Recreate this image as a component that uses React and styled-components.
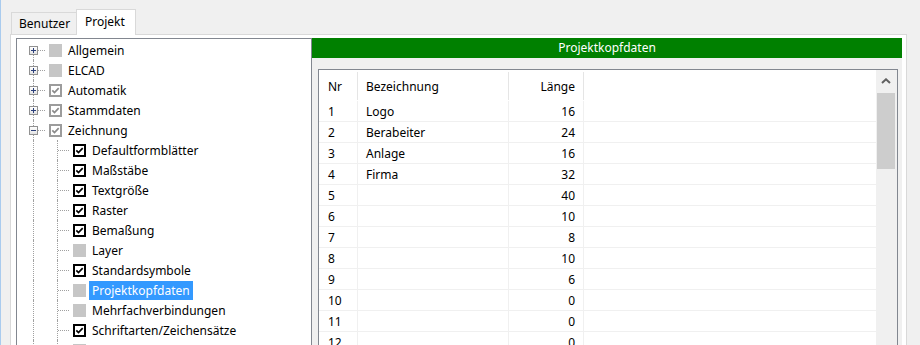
import React from "react";
import styled, { createGlobalStyle, css } from "styled-components";

const GlobalStyle = createGlobalStyle`
    html, body {
        margin: 0;
        padding: 0;
        background: #f0f0f0;
    }
    body {
        font-family: "Noto Sans", "Open Sans", sans-serif;
        font-size: 12px;
        color: #000;
    }
`;

const TREE_ITEMS = [
    { level: 0, expander: "plus", box: "gray", label: "Allgemein", first: true },
    { level: 0, expander: "plus", box: "gray", label: "ELCAD" },
    { level: 0, expander: "plus", box: "grayChecked", label: "Automatik" },
    { level: 0, expander: "plus", box: "grayChecked", label: "Stammdaten" },
    { level: 0, expander: "minus", box: "grayChecked", label: "Zeichnung" },
    { level: 1, box: "checked", label: "Defaultformblätter" },
    { level: 1, box: "checked", label: "Maßstäbe" },
    { level: 1, box: "checked", label: "Textgröße" },
    { level: 1, box: "checked", label: "Raster" },
    { level: 1, box: "checked", label: "Bemaßung" },
    { level: 1, box: "gray", label: "Layer" },
    { level: 1, box: "checked", label: "Standardsymbole" },
    { level: 1, box: "gray", label: "Projektkopfdaten", selected: true },
    { level: 1, box: "gray", label: "Mehrfachverbindungen" },
    { level: 1, box: "checked", label: "Schriftarten/Zeichensätze" },
    { level: 1, box: "gray", label: "Grafikeinstellungen" },
];

const ROWS = [
    ["1", "Logo", "16"],
    ["2", "Berabeiter", "24"],
    ["3", "Anlage", "16"],
    ["4", "Firma", "32"],
    ["5", "", "40"],
    ["6", "", "10"],
    ["7", "", "8"],
    ["8", "", "10"],
    ["9", "", "6"],
    ["10", "", "0"],
    ["11", "", "0"],
    ["12", "", "0"],
];

const Window = styled.div`
    height: 345px;
    overflow: hidden;
    border-left: 1px solid #a9cbee;
    padding: 9px 0 0 9px;
    box-sizing: border-box;
`;

const TabStrip = styled.div`
    display: flex;
    align-items: flex-end;
    height: 25px;
    padding-left: 1px;
    position: relative;
    z-index: 1;
`;

const Tab = styled.div`
    box-sizing: border-box;
    border: 1px solid #d9d9d9;
    border-bottom: none;
    white-space: nowrap;
    ${(p) =>
        p.$active
            ? css`
                  width: 60px;
                  height: 26px;
                  margin-left: -1px;
                  margin-bottom: -1px;
                  padding: 3px 0 0 8px;
                  background: #ffffff;
              `
            : css`
                  width: 66px;
                  height: 22px;
                  padding: 2px 0 0 7px;
                  background: #f0f0f0;
              `}
`;

const TabPanel = styled.div`
    width: 897px;
    height: 340px;
    box-sizing: border-box;
    border: 1px solid #d9d9d9;
    background: #ffffff;
    padding: 3px 4px 0 5px;
    display: flex;
`;

const Tree = styled.div`
    width: 296px;
    box-sizing: border-box;
    border: 1px solid #828790;
    background: #ffffff;
    padding: 1px 0 0 4px;
    overflow: hidden;
`;

const TreeRow = styled.div`
    display: flex;
    align-items: center;
    height: 20px;
`;

const Guide = styled.div`
    position: relative;
    width: 24px;
    height: 20px;
    flex-shrink: 0;

    &::before {
        content: "";
        position: absolute;
        left: 12px;
        top: ${(p) => (p.$first ? "10px" : "0")};
        bottom: 0;
        border-left: 1px dotted #a0a0a0;
    }

    &::after {
        content: "";
        display: ${(p) => (p.$branch ? "block" : "none")};
        position: absolute;
        left: 13px;
        right: 0;
        top: 10px;
        border-top: 1px dotted #a0a0a0;
    }
`;

const Expander = styled.div`
    position: absolute;
    left: 8px;
    top: 6px;
    width: 9px;
    height: 9px;
    box-sizing: border-box;
    border: 1px solid #919191;
    background: linear-gradient(#ffffff, #e3e3e3);
    z-index: 1;
    display: flex;
    align-items: center;
    justify-content: center;
`;

const Box = styled.div`
    width: 13px;
    height: 13px;
    margin-left: 4px;
    flex-shrink: 0;
    box-sizing: border-box;
    display: flex;
    align-items: center;
    justify-content: center;
    ${(p) =>
        p.$kind === "gray" &&
        css`
            background: #c6c6c6;
        `}
    ${(p) =>
        p.$kind === "grayChecked" &&
        css`
            background: #ffffff;
            border: 2px solid #9c9c9c;
            color: #8a8a8a;
        `}
    ${(p) =>
        p.$kind === "checked" &&
        css`
            background: #ffffff;
            border: 2px solid #000000;
            color: #000000;
        `}
`;

const Label = styled.span`
    margin-left: 3px;
    padding: 0 3px;
    height: 19px;
    line-height: 19px;
    white-space: nowrap;
    ${(p) =>
        p.$selected &&
        css`
            background: #3399ff;
            color: #ffffff;
        `}
`;

const RightPanel = styled.div`
    flex: 1;
    display: flex;
    flex-direction: column;
    background: #f0f0f0;
`;

const TitleBar = styled.div`
    height: 20px;
    background: #008000;
    color: #ffffff;
    display: flex;
    align-items: center;
    justify-content: center;
    line-height: 20px;
`;

const TableBox = styled.div`
    margin: 11px 4px 0 6px;
    height: 300px;
    border: 1px solid #828790;
    background: #ffffff;
    display: flex;
`;

const Grid = styled.div`
    flex: 1;
    overflow: hidden;
`;

const Row = styled.div`
    display: grid;
    grid-template-columns: 39px 151px 75px 1fr;
    height: ${(p) => (p.$header ? "31px" : "21px")};
    box-sizing: border-box;
    border-bottom: 1px solid ${(p) => (p.$header ? "transparent" : "#f0f0f0")};
`;

const Cell = styled.div`
    display: flex;
    align-items: center;
    box-sizing: border-box;
    padding: 0 8px;
    white-space: nowrap;
    border-right: 1px solid ${(p) => (p.$header ? "#e5e5e5" : "#f0f0f0")};
    ${(p) => p.$header && "margin-top: 2px;"}
    ${(p) => p.$first && "padding-left: 9px;"}
    ${(p) => p.$right && "justify-content: flex-end;"}
    &:last-child {
        border-right: none;
    }
`;

const ScrollBar = styled.div`
    width: 21px;
    flex-shrink: 0;
    background: #f0f0f0;
    display: flex;
    flex-direction: column;
`;

const ScrollButton = styled.div`
    height: 22px;
    display: flex;
    align-items: center;
    justify-content: center;
    padding-right: 1px;
`;

const Thumb = styled.div`
    height: 76px;
    margin: 1px 2px 0 1px;
    background: #cdcdcd;
`;

function CheckMark() {
    return (
        <svg width="9" height="9" viewBox="0 0 9 9">
            <polyline
                points="1.3,4.4 3.5,6.6 7.7,2.2"
                fill="none"
                stroke="currentColor"
                strokeWidth="1.7"
            />
        </svg>
    );
}

function ExpandIcon({ open }) {
    return (
        <svg width="7" height="7" viewBox="0 0 7 7">
            <rect x="1" y="3" width="5" height="1" fill="#2c3f7a" />
            {!open && <rect x="3" y="1" width="1" height="5" fill="#2c3f7a" />}
        </svg>
    );
}

function TreeItem({ item }) {
    return (
        <TreeRow>
            <Guide $first={item.first} $branch={item.level === 0}>
                {item.expander && (
                    <Expander>
                        <ExpandIcon open={item.expander === "minus"} />
                    </Expander>
                )}
            </Guide>
            {item.level === 1 && <Guide $branch />}
            <Box $kind={item.box}>{item.box !== "gray" && <CheckMark />}</Box>
            <Label $selected={item.selected}>{item.label}</Label>
        </TreeRow>
    );
}

export default function App() {
    return (
        <>
            <GlobalStyle />
            <Window>
                <TabStrip>
                    <Tab>Benutzer</Tab>
                    <Tab $active>Projekt</Tab>
                </TabStrip>
                <TabPanel>
                    <Tree>
                        {TREE_ITEMS.map((item) => (
                            <TreeItem key={item.label} item={item} />
                        ))}
                    </Tree>
                    <RightPanel>
                        <TitleBar>Projektkopfdaten</TitleBar>
                        <TableBox>
                            <Grid>
                                <Row $header>
                                    <Cell $header $first>Nr</Cell>
                                    <Cell $header>Bezeichnung</Cell>
                                    <Cell $header $right>Länge</Cell>
                                    <Cell $header />
                                </Row>
                                {ROWS.map(([nr, name, len]) => (
                                    <Row key={nr}>
                                        <Cell $first>{nr}</Cell>
                                        <Cell>{name}</Cell>
                                        <Cell $right>{len}</Cell>
                                        <Cell />
                                    </Row>
                                ))}
                            </Grid>
                            <ScrollBar>
                                <ScrollButton>
                                    <svg width="10" height="6" viewBox="0 0 10 6">
                                        <polyline
                                            points="1,5 5,1.3 9,5"
                                            fill="none"
                                            stroke="#606060"
                                            strokeWidth="2"
                                        />
                                    </svg>
                                </ScrollButton>
                                <Thumb />
                            </ScrollBar>
                        </TableBox>
                    </RightPanel>
                </TabPanel>
            </Window>
        </>
    );
}
